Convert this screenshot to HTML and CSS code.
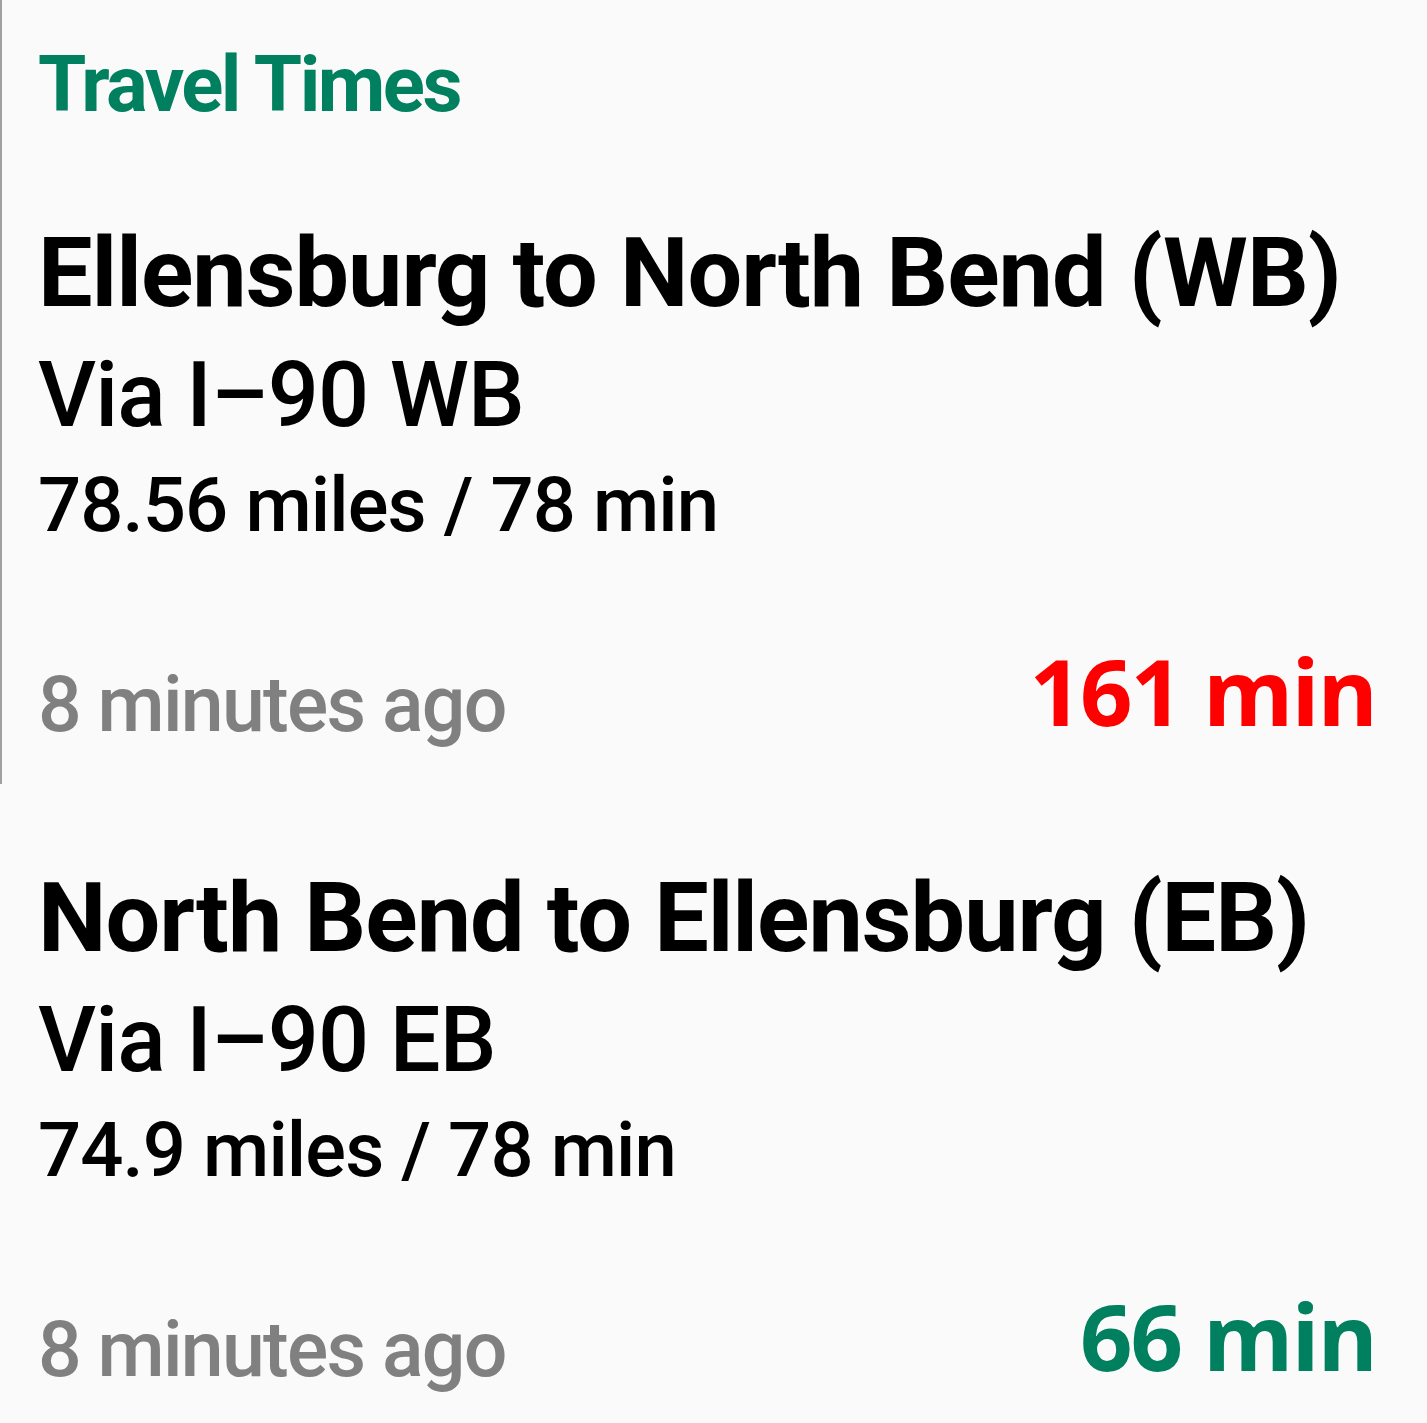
FILE: index.html
```html
<!DOCTYPE html>
<html lang="en">
<head>
  <meta charset="UTF-8">
  <meta name="viewport" content="width=device-width, initial-scale=1.0">
  <title>Travel Times</title>
  <link rel="stylesheet" href="styles.css">
</head>
<body>

<div class="card card-first">
  <h1 class="page-title">Travel Times</h1>

  <div class="route">
    <h2 class="route-name">Ellensburg to North Bend (WB)</h2>
    <div class="route-via">Via I&ndash;90 WB</div>
    <div class="route-distance">78.56 miles / 78 min</div>
    <div class="route-footer">
      <span class="updated">8 minutes ago</span>
      <span class="current-time slow">161 min</span>
    </div>
  </div>
</div>

<div class="card">
  <div class="route">
    <h2 class="route-name">North Bend to Ellensburg (EB)</h2>
    <div class="route-via">Via I&ndash;90 EB</div>
    <div class="route-distance">74.9 miles / 78 min</div>
    <div class="route-footer">
      <span class="updated">8 minutes ago</span>
      <span class="current-time ok">66 min</span>
    </div>
  </div>
</div>

</body>
</html>
```

FILE: styles.css
```css
body {
  margin: 0;
  padding: 0;
  font-family: Roboto, "Liberation Sans", sans-serif;
  background-color: #fafafa;
  color: #000;
}

.card {
  padding: 0 51px 0 38px;
}

/* first card has the thin grey edge on the left */
.card-first {
  border-left: 2px solid #a0a0a0;
  padding-left: 36px;
  padding-bottom: 16px;
}

.page-title {
  margin: 0;
  padding-top: 35px;
  font-size: 78px;
  line-height: 100px;
  font-weight: bold;
  letter-spacing: -2.5px;
  color: #00805f;
}

.route {
  margin-top: 78px;
}

.card + .card .route {
  margin-top: 74px;
}

.route-name {
  margin: 0;
  font-size: 97px;
  line-height: 120px;
  font-weight: bold;
  letter-spacing: -1px;
  white-space: nowrap;
}

.route-via {
  font-size: 90px;
  line-height: 126px;
  font-weight: 500;
  letter-spacing: -0.9px;
}

.route-distance {
  font-size: 76px;
  line-height: 93px;
  font-weight: 500;
  letter-spacing: -0.9px;
}

.route-footer {
  display: flex;
  justify-content: space-between;
  align-items: flex-start;
  margin-top: 90px;
}

.updated {
  font-size: 77px;
  line-height: 126px;
  font-weight: 500;
  letter-spacing: -1.7px;
  color: #808080;
}

.current-time {
  font-family: "Open Sans", "Noto Sans", sans-serif;
  font-size: 92px;
  line-height: 97px;
  font-weight: bold;
  letter-spacing: -2px;
}

.current-time.slow {
  color: #ff0000;
}

.current-time.ok {
  color: #00805f;
}
```
